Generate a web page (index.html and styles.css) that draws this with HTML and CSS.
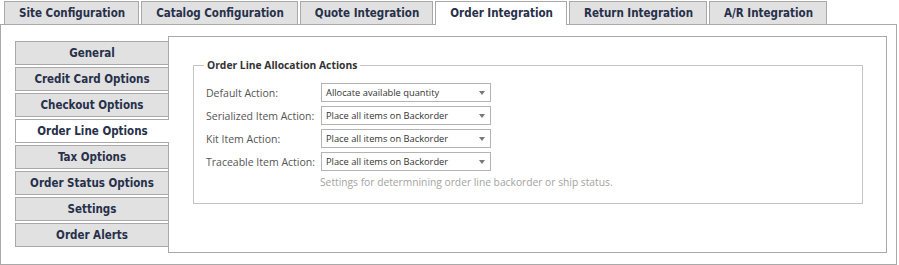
FILE: index.html
```html
<!doctype html>
<html lang="en">
<head>
  <meta charset="utf-8" />
  <title>Order Integration</title>
  <link rel="stylesheet" href="styles.css">
</head>
<body>

  <div class="tabs">
    <div class="tab">Site Configuration</div>
    <div class="tab">Catalog Configuration</div>
    <div class="tab">Quote Integration</div>
    <div class="tab active">Order Integration</div>
    <div class="tab">Return Integration</div>
    <div class="tab">A/R Integration</div>
  </div>

  <div class="panel">
    <div class="side">
      <div class="side-tab">General</div>
      <div class="side-tab">Credit Card Options</div>
      <div class="side-tab">Checkout Options</div>
      <div class="side-tab active">Order Line Options</div>
      <div class="side-tab">Tax Options</div>
      <div class="side-tab">Order Status Options</div>
      <div class="side-tab">Settings</div>
      <div class="side-tab">Order Alerts</div>
    </div>

    <div class="content">
      <fieldset class="group">
        <legend>Order Line Allocation Actions</legend>

        <div class="row">
          <label>Default Action:</label>
          <div class="select"><span>Allocate available quantity</span><i class="arrow"></i></div>
        </div>
        <div class="row">
          <label>Serialized Item Action:</label>
          <div class="select"><span>Place all items on Backorder</span><i class="arrow"></i></div>
        </div>
        <div class="row">
          <label>Kit Item Action:</label>
          <div class="select"><span>Place all items on Backorder</span><i class="arrow"></i></div>
        </div>
        <div class="row">
          <label>Traceable Item Action:</label>
          <div class="select"><span>Place all items on Backorder</span><i class="arrow"></i></div>
        </div>
        <p class="hint">Settings for determnining order line backorder or ship status.</p>
      </fieldset>
    </div>
  </div>

</body>
</html>
```

FILE: styles.css
```css
:root{
  --line:#a9a9a9;
  --tab-bg:#e1e1e1;
  --tab-text:#27304a;
  --muted:#a3a3a3;
}
body{
  margin:0;
  background:#fff;
  font-family:"Open Sans", "Noto Sans", Arial, sans-serif;
}

/* top tabs */
.tabs{
  display:flex;
  gap:2px;
  padding:1px 0 0 4px;
  height:23px;
}
.tab{
  position:relative;
  box-sizing:border-box;
  height:23px;
  padding:0 13px 0 14px;
  border:1px solid var(--line);
  border-bottom:0;
  background:var(--tab-bg);
  color:var(--tab-text);
  font-family:"DejaVu Sans Condensed", "DejaVu Sans", sans-serif;
  font-stretch:condensed;
  font-weight:700;
  font-size:11.5px;
  line-height:22px;
  white-space:nowrap;
}
.tab.active{
  background:#fff;
  height:24px;
  z-index:1;
}

.panel{
  box-sizing:border-box;
  width:897px;
  height:241px;
  border:1px solid var(--line);
  display:flex;
  padding:11px 0 0 14px;
}

/* side tabs */
.side{
  display:flex;
  flex-direction:column;
  gap:2px;
  padding-top:5px;
  margin-right:-1px;
  position:relative;
  z-index:1;
}
.side-tab{
  box-sizing:border-box;
  width:154px;
  height:24px;
  border:1px solid var(--line);
  background:var(--tab-bg);
  color:var(--tab-text);
  font-family:"DejaVu Sans Condensed", "DejaVu Sans", sans-serif;
  font-stretch:condensed;
  font-weight:700;
  font-size:11.5px;
  line-height:22px;
  text-align:center;
  white-space:nowrap;
}
.side-tab.active{
  background:#fff;
  border-right:0;
}

.content{
  box-sizing:border-box;
  width:719px;
  height:217px;
  border:1px solid var(--line);
  padding:21px 0 0 24px;
}

/* fieldset */
.group{
  box-sizing:border-box;
  width:670px;
  height:146px;
  margin:0;
  padding:11px 12px 0 12px;
  border:1px solid #c4c4c4;
}
.group legend{
  padding:0 3px;
  margin-left:-2px;
  font-weight:700;
  font-size:10.3px;
  color:#333;
}

.row{
  display:flex;
  align-items:center;
  margin-bottom:4px;
}
.row label{
  width:115px;
  font-size:10.5px;
  color:#555;
  white-space:nowrap;
}
.select{
  box-sizing:border-box;
  width:170px;
  height:19px;
  border:1px solid #b3b3b3;
  display:flex;
  align-items:center;
  justify-content:space-between;
  padding:0 5px 0 4px;
  font-size:9.3px;
  color:#333;
}
.arrow{
  width:0;
  height:0;
  border-left:3.5px solid transparent;
  border-right:3.5px solid transparent;
  border-top:4px solid #777;
}
.hint{
  margin:2px 0 0 114px;
  font-size:10.25px;
  color:var(--muted);
}
```
